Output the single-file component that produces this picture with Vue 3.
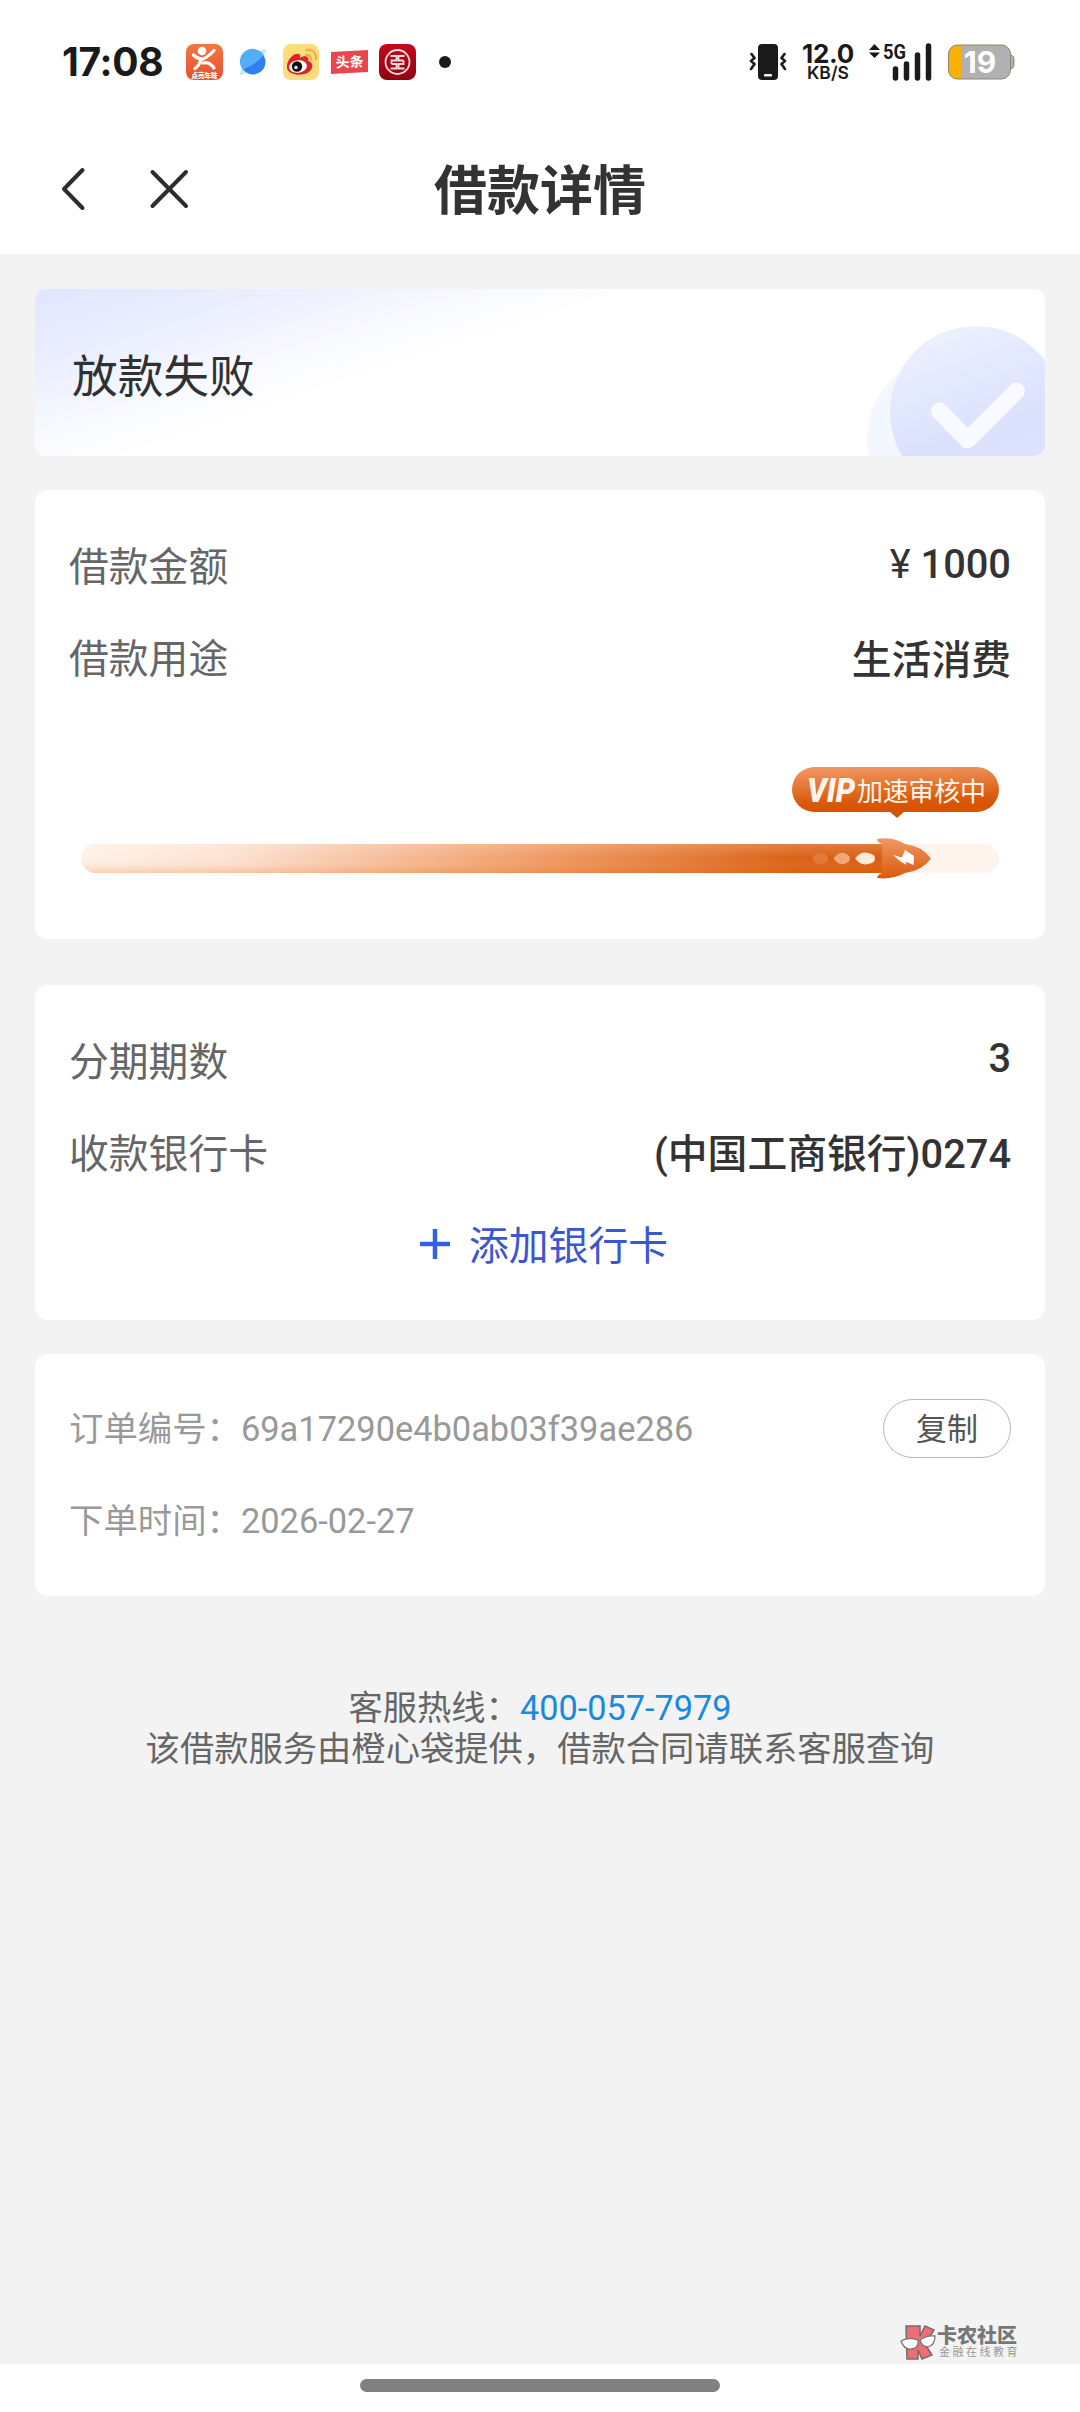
<script setup>
const loanRows = [
  { label: '借款金额', sign: '¥ ', value: '1000' },
  { label: '借款用途', value: '生活消费' },
]
const bankRows = [
  { label: '分期期数', value: '3' },
  { label: '收款银行卡', value: '(中国工商银行)0274' },
]
</script>

<template>
  <div class="page">
    <div class="status">
      <span class="clock">17:08</span>
      <div class="apps">
        <svg width="37" height="36" viewBox="0 0 37 36">
          <defs>
            <linearGradient id="dp" x1="0" y1="0" x2="0" y2="1"><stop offset="0" stop-color="#f27843" /><stop offset="1" stop-color="#e8502f" /></linearGradient>
          </defs>
          <rect width="37" height="36" rx="8" fill="url(#dp)" />
          <circle cx="16" cy="7" r="4.300" fill="#fff" />
          <path d="M7.500 11Q12 15.500 17 15Q22 13 28 6.500M14.500 15Q15 20 9 24.500M17 19Q23 17 28 24" fill="none" stroke="#fff" stroke-width="3.200" stroke-linecap="round" />
          <text x="18.500" y="33.500" text-anchor="middle" class="tiny">点亮年味</text>
        </svg>
        <svg class="globe" width="32" height="32" viewBox="0 0 32 32">
          <ellipse cx="16" cy="16" rx="18" ry="4" transform="rotate(-45 16 16)" fill="#c3eafc" />
          <circle cx="16" cy="16" r="12.500" fill="#2f7fee" />
          <path d="M6 23.500A12.500 12.500 0 1 1 26.500 9.500Q18 19 6 23.500Z" fill="#53aef8" />
        </svg>
        <svg class="weibo" width="36" height="36" viewBox="0 0 36 36">
          <rect width="36" height="36" rx="8" fill="#fddc7b" />
          <path d="M4 24C3 15 12 8 16 10C18 11 17 13 17 14C21 11 27 12 25 17C30 18 31 24 26 28C19 33 5 31 4 24Z" fill="#e0232a" />
          <ellipse cx="15" cy="22.500" rx="9" ry="6.300" transform="rotate(-8 15 22.500)" fill="#fff" />
          <circle cx="14" cy="22.500" r="5.200" fill="#111" />
          <circle cx="13" cy="23.500" r="1.700" fill="#fff" />
          <path d="M23 11Q28 10 28 16M23.500 6Q33 5 33 15" fill="none" stroke="#f3ad45" stroke-width="2.300" stroke-linecap="round" />
        </svg>
        <svg class="news" width="37" height="24" viewBox="0 0 37 24">
          <path d="M0 2L37 0V22L0 24Z" fill="#e9474b" />
          <text x="18.500" y="17" text-anchor="middle" transform="rotate(-2 18 12)" class="newst">头条</text>
        </svg>
        <svg class="bank" width="37" height="36" viewBox="0 0 37 36">
          <defs><linearGradient id="ic" x1="0" y1="0" x2="0" y2="1"><stop offset="0" stop-color="#c4091b" /><stop offset="1" stop-color="#8f0312" /></linearGradient></defs>
          <rect width="37" height="36" rx="8" fill="url(#ic)" />
          <circle cx="18.500" cy="18" r="12" fill="none" stroke="#f7dfdc" stroke-width="1.800" />
          <path d="M11.500 12H17.500V16.500H12.500V20M25.500 12H19.500V16.500H24.500M11.500 24.500H17.500V20H12.500M25.500 24.500H19.500V20H24.500V16.500" fill="none" stroke="#f7dfdc" stroke-width="1.800" />
        </svg>
        <i class="dot"></i>
      </div>
      <div class="system">
        <svg width="38" height="38" viewBox="0 0 38 38">
          <rect x="9" y="1" width="20" height="36" rx="4" fill="#1a1a1a" />
          <rect x="15" y="31" width="8" height="2.400" rx="1" fill="#fff" />
          <path d="M2.500 11L5.500 15L2 18L5.500 21L2 26M35.500 11L32.500 15L36 18L32.500 21L36 26" fill="none" stroke="#1a1a1a" stroke-width="2.600" stroke-linecap="round" stroke-linejoin="round" />
        </svg>
        <div class="speed"><b>12.0</b><span>KB/S</span></div>
        <svg class="signal" width="64" height="38" viewBox="0 0 64 38">
          <path d="M5.500 1L11 7H0ZM5.500 15L11 9.500H0Z" fill="#1a1a1a" />
          <text x="14" y="16" class="fiveg" textLength="23" lengthAdjust="spacingAndGlyphs">5G</text>
          <path d="M26.500 26V35M37.500 21V35M48.500 12V35M59.500 3V35" stroke="#1a1a1a" stroke-width="5.500" stroke-linecap="round" />
        </svg>
        <svg class="battery" width="67" height="36" viewBox="0 0 67 36">
          <defs><clipPath id="batc"><rect x=".5" y="1" width="62" height="34" rx="9" /></clipPath></defs>
          <path d="M61 11H63Q66 12 66 15V21Q66 24 63 25H61Z" fill="#b1b1b1" stroke="#858585" />
          <g clip-path="url(#batc)"><rect width="64" height="36" fill="#b1b1b1" /><rect width="13.500" height="36" fill="#fbb103" /></g>
          <rect x=".5" y="1" width="62" height="34" rx="9" fill="none" stroke="#8d8570" />
          <text x="32" y="29" text-anchor="middle" class="pct">19</text>
        </svg>
      </div>
    </div>

    <header class="nav">
      <svg width="140" height="60" viewBox="0 0 140 60" fill="none" stroke="#2d2d2d" stroke-width="4" stroke-linecap="round" stroke-linejoin="round">
        <path d="M22.500 11L4 30L22.500 49M92.500 13L126 47M126 13L92.500 47" />
      </svg>
      <h1>借款详情</h1>
    </header>

    <main>
      <section class="banner">
        <span>放款失败</span>
        <svg class="seal" width="180" height="131" viewBox="0 0 180 131">
          <defs>
            <linearGradient id="sealg" x1=".2" y1="0" x2=".55" y2="1"><stop offset="0" stop-color="#edf2fe" /><stop offset=".65" stop-color="#dae1fd" /><stop offset="1" stop-color="#dde2ff" /></linearGradient>
          </defs>
          <circle cx="86" cy="114" r="84" fill="#f5f7ff" />
          <circle cx="111" cy="87" r="86" fill="url(#sealg)" />
          <path d="M74.500 86L102.500 115L151.500 66" fill="none" stroke="#f8faff" stroke-width="17" stroke-linecap="round" stroke-linejoin="round" />
        </svg>
      </section>

      <section class="card loan">
        <div v-for="row in loanRows" :key="row.label" class="row"><span>{{ row.label }}</span><b><i v-if="row.sign">{{ row.sign }}</i>{{ row.value }}</b></div>
        <svg class="progress" width="920" height="114" viewBox="0 0 920 114">
          <defs>
            <linearGradient id="bar" x1="0" x2="1"><stop offset="0" stop-color="#fff0e5" /><stop offset=".18" stop-color="#fde1d0" /><stop offset=".55" stop-color="#ef9a62" /><stop offset=".88" stop-color="#d95b0c" /><stop offset="1" stop-color="#d75504" /></linearGradient>
            <linearGradient id="shade" x1="0" y1="0" x2="0" y2="1"><stop offset="0" stop-color="#fff" stop-opacity=".22" /><stop offset=".5" stop-color="#fff" stop-opacity=".04" /><stop offset="1" stop-color="#e86c19" stop-opacity=".24" /></linearGradient>
            <linearGradient id="badge" x1="0" y1="0" x2=".15" y2="1"><stop offset="0" stop-color="#f29a67" /><stop offset=".8" stop-color="#d95a0a" /><stop offset="1" stop-color="#d65300" /></linearGradient>
            <linearGradient id="rocket" x1="0" y1="0" x2="0" y2="1"><stop offset="0" stop-color="#f09864" /><stop offset="1" stop-color="#d95a0b" /></linearGradient>
          </defs>
          <rect y="77" width="918" height="29" rx="14.500" fill="#fff4ed" />
          <path d="M14.500 77H810V106H14.500A14.500 14.500 0 0 1 14.500 77Z" fill="url(#bar)" />
          <path d="M14.500 77H810V106H14.500A14.500 14.500 0 0 1 14.500 77Z" fill="url(#shade)" />
          <path d="M731 91.500Q735 85 741 86Q747 88 747 91.500Q747 95 741 97Q735 98 731 91.500Z" fill="#e37a38" />
          <path d="M752.500 91.500Q757 85 763 86Q769 88 769 91.500Q769 95 763 97Q757 98 752.500 91.500Z" fill="#f0a77c" />
          <path d="M774 91.500Q780 84 787 86Q794 87 794 91.500Q794 96 787 97Q780 99 774 91.500Z" fill="#ffebdc" />
          <path d="M796 72Q811 69 824 77Q841 79 850 91.500Q841 104 824 106Q811 113 796 111Q796 108 801 106V77Q796 75 796 72Z" fill="url(#rocket)" />
          <path d="M812 88L821 90.500L824 83L833 89L832.500 98L824.500 94.500L825.500 98Q818 94 812 88Z" fill="#fff" />
          <rect x="711" width="207" height="45" rx="22.500" fill="url(#badge)" />
          <path d="M808 44H824L816 51Z" fill="#d25506" />
          <text x="726" y="35" class="vip" textLength="48" lengthAdjust="spacingAndGlyphs">VIP</text>
          <text x="776" y="34" class="review" textLength="129">加速审核中</text>
        </svg>
      </section>

      <section class="card bankcard">
        <div v-for="row in bankRows" :key="row.label" class="row"><span>{{ row.label }}</span><b>{{ row.value }}</b></div>
        <div class="add">
          <svg width="32" height="32" viewBox="0 0 32 32"><path d="M16 1V31M1 16H31" stroke="#3560e8" stroke-width="4.500" /></svg>
          <span>添加银行卡</span>
        </div>
      </section>

      <section class="card order">
        <div class="row"><span>订单编号：69a17290e4b0ab03f39ae286</span><button>复制</button></div>
        <div class="row"><span>下单时间：2026-02-27</span></div>
      </section>

      <footer>
        <div>客服热线：<a>400-057-7979</a></div>
        <div>该借款服务由橙心袋提供，借款合同请联系客服查询</div>
      </footer>
      <div class="brand">
        <svg width="36" height="37" viewBox="0 0 36 37">
          <path d="M6 2H20V12L25 2L34 6L25 20L32 31L22 35L18 26V35H7Z" fill="#ed6e76" stroke="#78696b" stroke-width="1.500" />
          <path d="M1 17Q8 13 18 16Q19 24 12 25Q4 26 1 17ZM20 16Q27 11 35 12Q35 21 28 23Q22 23 20 16Z" fill="#fff" stroke="#777" stroke-width="1.300" />
        </svg>
        <div><strong>卡农社区</strong><small>金融在线教育</small></div>
      </div>
    </main>
    <div class="gesture"><i></i></div>
  </div>
</template>

<style>
body { margin: 0; background: #f3f3f3; }
</style>

<style scoped>
.page { width: 1080px; height: 2412px; display: flex; flex-direction: column; background: #f3f3f3; color: #333; font-family: Roboto, "Noto Sans CJK SC", sans-serif; overflow: hidden; }
.status { height: 124px; box-sizing: border-box; background: #fff; display: flex; align-items: center; padding: 0 65px 0 62px; color: #1a1a1a; }
.status svg { overflow: visible; }
.clock { width: 124px; font: 700 39px/40px Inter, sans-serif; letter-spacing: -.3px; white-space: nowrap; }
.apps { display: flex; align-items: center; }
.globe { margin-left: 14px; }
.weibo { margin-left: 14px; }
.news { margin-left: 12px; }
.bank { margin-left: 11px; }
.dot { width: 12px; height: 12px; border-radius: 50%; background: #1a1a1a; margin-left: 23px; }
.tiny { font: 900 6.500px "Noto Sans CJK SC", sans-serif; fill: #fff; }
.newst { font: 700 14px "Noto Sans CJK SC", sans-serif; fill: #fff; }
.system { margin-left: auto; display: flex; align-items: center; }
.speed { width: 54px; margin-left: 14px; display: flex; flex-direction: column; align-items: center; font-family: Inter, sans-serif; }
.speed b { font-size: 26px; line-height: 21px; letter-spacing: -.3px; }
.speed span { font-size: 17.500px; font-weight: 600; line-height: 17px; }
.signal { margin-left: 14px; }
.battery { margin-left: 15px; }
.fiveg { font: 700 21px Roboto, sans-serif; fill: #1a1a1a; }
.pct { font: 700 30px Inter, sans-serif; fill: #fff; }
.nav { height: 130px; background: #fff; position: relative; display: flex; justify-content: center; }
.nav svg { position: absolute; left: 60px; top: 35px; }
.nav h1 { margin: 0; padding-top: 3px; font-size: 53px; line-height: 130px; height: 127px; font-weight: 700; color: #333; }
main { height: 2110px; flex: none; display: flex; flex-direction: column; padding: 35px 35px 0; box-sizing: border-box; position: relative; }
.banner { height: 167px; border-radius: 11px; position: relative; overflow: hidden; background: linear-gradient(162deg, #e0e6ff 0%, #ebefff 17%, #f8f9ff 29%, #fff 40%); display: flex; align-items: center; padding-left: 37px; box-sizing: border-box; font-size: 45.700px; color: #303133; }
.banner span { margin-top: 0; }
.seal { position: absolute; right: 0; bottom: 0; }
.card { background: #fff; border-radius: 13px; padding: 29px 35px 0; box-sizing: border-box; display: flex; flex-direction: column; }
.loan { margin-top: 34px; height: 449px; }
.bankcard { margin-top: 46px; height: 335px; }
.order { margin-top: 34px; height: 242px; padding-top: 28px; color: #999; font-size: 34.400px; }
.row { height: 92px; display: flex; align-items: center; justify-content: space-between; white-space: nowrap; }
.loan .row, .bankcard .row { font-size: 39.800px; color: #666; }
.row span { margin: 0 0 4px -1px; }
.row b { font-weight: 500; color: #333; margin-bottom: 1px; margin-right: -1px; }
.row b i { font-style: normal; font-weight: 400; }
.bankcard .row b { margin-bottom: 3px; }
.progress { margin: 64px 0 0 11px; flex: none; }
.vip { font: italic 900 34px Roboto, sans-serif; fill: #fff5ed; }
.review { font: 400 26px "Noto Sans CJK SC", sans-serif; fill: #fff5ed; }
.add { height: 92px; display: flex; align-items: center; justify-content: center; gap: 18px; font-size: 39.800px; color: #3c56d0; padding-left: 7px; }
.add span { margin-bottom: 3px; }
button { width: 128px; height: 59px; padding: 0 0 3px; margin-right: -1px; border: 1px solid #b5b5b5; border-radius: 30px; background: #fff; font: 31px "Noto Sans CJK SC", sans-serif; color: #555; }
footer { margin-top: 92px; font-size: 34.300px; line-height: 41px; text-align: center; color: #666; white-space: nowrap; }
footer a { color: #1989e0; }
.brand { position: absolute; left: 900px; bottom: 3px; display: flex; gap: 1px; align-items: center; }
.brand div { display: flex; flex-direction: column; }
.brand strong { font-size: 20px; line-height: 20px; font-weight: 900; color: #777; }
.brand small { font-size: 11px; line-height: 14px; letter-spacing: 2.500px; color: #999; padding-left: 2px; }
.gesture { flex: 1; background: #fff; display: flex; justify-content: center; padding-top: 15px; }
.gesture i { width: 360px; height: 13px; border-radius: 7px; background: #808080; }
</style>
